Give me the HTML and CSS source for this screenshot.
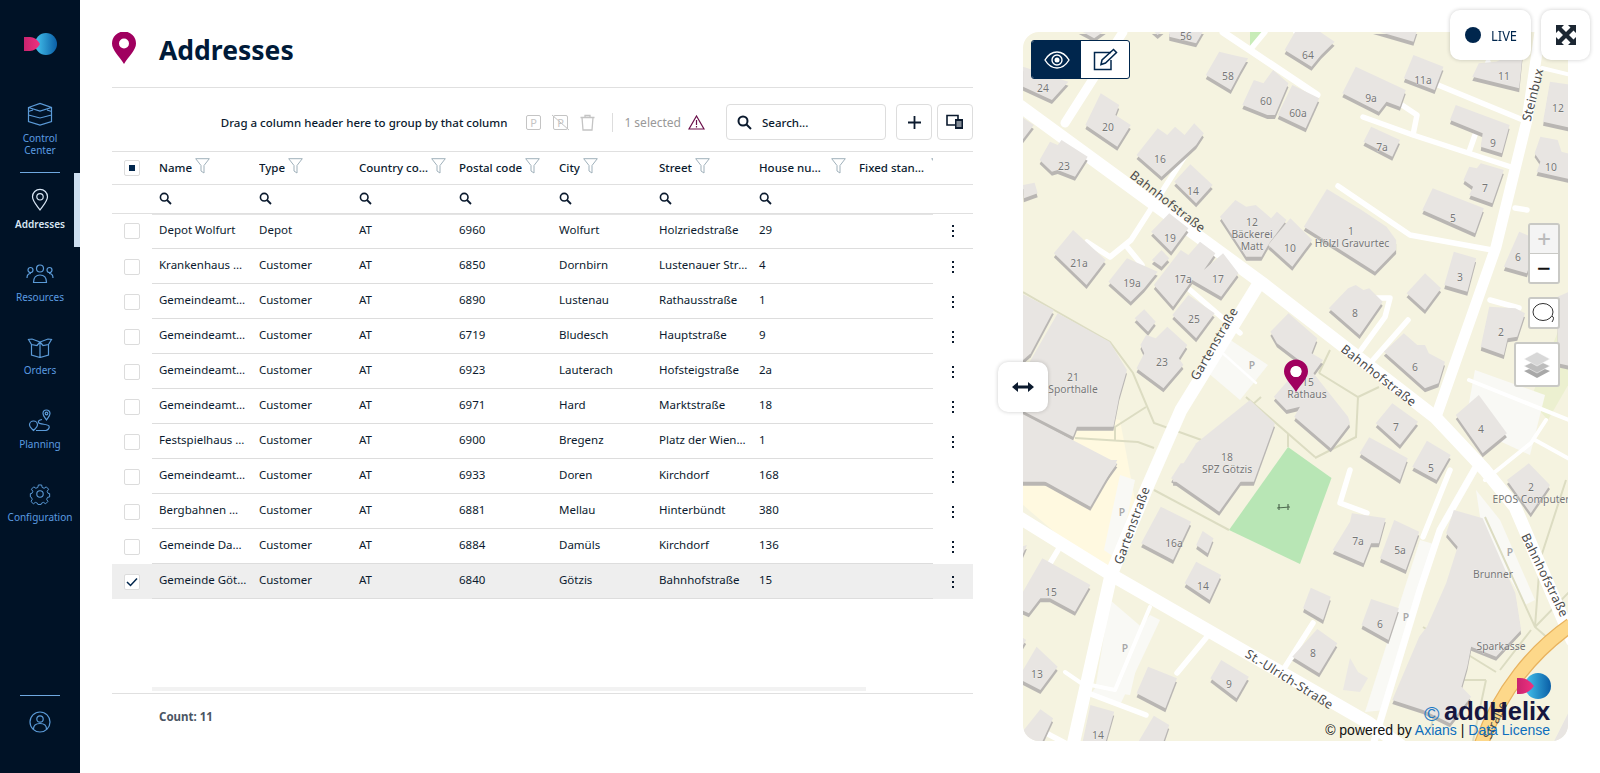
FILE: index.html
```html
<!DOCTYPE html>
<html lang="en">
<head>
<meta charset="utf-8">
<title>Addresses</title>
<link rel="stylesheet" href="styles.css">
</head>
<body>
<div class="app">
  <nav class="nav">
    <svg class="logo" width="40" height="30" viewBox="0 0 40 30"><defs><linearGradient id="lb" x1="0" x2="1"><stop offset="0" stop-color="#45c4ee"/><stop offset="1" stop-color="#0a5ea6"/></linearGradient><linearGradient id="lp" x1="0" x2="1"><stop offset="0" stop-color="#c9246f"/><stop offset="1" stop-color="#f0317f"/></linearGradient></defs><circle cx="26" cy="15" r="11" fill="url(#lb)"/><path d="M4 8h6q6 0 10 7-4 7-10 7H4z" fill="url(#lp)"/></svg>
    <a class="nav-item nav-first"><svg class="ni" width="26" height="24" viewBox="0 0 26 24"><path d="M1.500 5.500 13 1.500l11.500 4v14L13 23 1.500 19.500zM1.500 5.500 13 9l11.500-3.500M1.500 9.500 6 8M24.500 9.500 20 8M1.500 13 13 16l11.500-3" fill="none"/></svg><span>Control<br>Center</span></a>
    <div class="nav-rule"></div>
    <a class="nav-item nav-active"><svg class="ni" width="18" height="23" viewBox="0 0 18 23"><path d="M9 22C5 16.500 1.500 13 1.500 8.800a7.500 7.500 0 0 1 15 0C16.500 13 13 16.500 9 22z" fill="none"/><circle cx="9" cy="8.800" r="3.200" fill="none"/></svg><span>Addresses</span></a>
    <a class="nav-item nav-res"><svg class="ni" width="28" height="20" viewBox="0 0 28 20"><circle cx="14" cy="4.500" r="3.500" fill="none"/><circle cx="4.500" cy="6" r="2.500" fill="none"/><circle cx="23.500" cy="6" r="2.500" fill="none"/><path d="M7.500 18.500c0-5 2.500-7.500 6.500-7.500s6.500 2.500 6.500 7.500zM1 14c0-3 1.500-4.500 4-4.500M27 14c0-3-1.500-4.500-4-4.500" fill="none"/></svg><span>Resources</span></a>
    <a class="nav-item nav-ord"><svg class="ni" width="26" height="21" viewBox="0 0 26 21"><path d="M4.500 7.500V18l8.500 2.500 8.500-2.500V7.500M13 5v15.500M13 5 5 2 1.500 2.500l3 5L10 8.500zM13 5l8-3 3.500.5-3 5L16 8.500z" fill="none"/></svg><span>Orders</span></a>
    <a class="nav-item nav-plan"><svg class="ni" width="24" height="23" viewBox="0 0 24 23"><path d="M18.500 11c-2-3-3.500-4.500-3.500-6.500a3.500 3.500 0 0 1 7 0c0 2-1.500 3.500-3.500 6.500z" fill="none"/><circle cx="18.500" cy="4.500" r="1.300" fill="none"/><path d="M5.500 21.500c-2-2-4-3.500-4-5.500a4 4 0 0 1 8 0c0 2-2 3.500-4 5.500z" fill="none"/><path d="M14 10.500c-3 .5-4 1.500-3.500 3 .8 2 9.500 1.500 10.500 3.500 1 2.500-1.500 4-3 4.500H8" fill="none"/></svg><span>Planning</span></a>
    <a class="nav-item nav-conf"><svg class="ni" width="22" height="22" viewBox="0 0 24 24"><circle cx="12" cy="12" r="3.500" fill="none"/><path d="M10 1.500h4l.6 3 2.400 1 2.600-1.700 2.800 2.800L20.700 9.200l1 2.400 2 .4v4l-2.600.5-1 2.400 1.500 2.600-2.800 2.800-2.600-1.700-2.400 1-.4 1.500h-4l-.5-1.500-2.400-1-2.600 1.700-2.800-2.800 1.500-2.600-1-2.400L.300 16v-4l2-.4 1-2.400-1.700-2.600 2.800-2.800L7 5.500l2.400-1z" transform="translate(1.200 .8) scale(.9)" fill="none"/></svg><span>Configuration</span></a>
    <div class="nav-rule nav-rule-bottom"></div>
    <svg class="ni nav-user" width="22" height="22" viewBox="0 0 22 22"><circle cx="11" cy="11" r="10" fill="none"/><circle cx="11" cy="8" r="3.200" fill="none"/><path d="M4.500 18c0-4 2.500-5.500 6.500-5.500s6.500 1.500 6.500 5.500" fill="none"/></svg>
  </nav>

  <main class="list">
    <header class="title">
      <svg width="24" height="32" viewBox="0 0 24 32"><path fill-rule="evenodd" d="M12 32C7 24 0 18 0 11.500a12 12 0 0 1 24 0C24 18 17 24 12 32zM12 6.500a5 5 0 1 0 0 10 5 5 0 0 0 0-10z" fill="#a0005f"/></svg>
      <h1>Addresses</h1>
    </header>
    <div class="toolbar">
      <span class="hint">Drag a column header here to group by that column</span>
      <svg class="ti" width="15" height="15" viewBox="0 0 15 15"><rect x=".5" y=".5" width="14" height="14" rx="1.500" fill="none" stroke="#c4c4c4"/><text x="7.500" y="11.500" class="pt">P</text></svg>
      <svg class="ti" width="19" height="17" viewBox="0 0 19 17"><rect x="2.500" y="1.500" width="14" height="14" rx="1.500" fill="none" stroke="#c4c4c4"/><text x="9.500" y="12.500" class="pt">P</text><path d="M1 1l17 15" stroke="#c4c4c4"/></svg>
      <svg class="ti" width="15" height="17" viewBox="0 0 15 17"><path d="M.500 3.500h14M5 3.500V1.500h5v2M2 3.500l1 12.500h9l1-12.500" fill="none" stroke="#c4c4c4" stroke-width="1.300"/></svg>
      <span class="sep"></span>
      <span class="sel">1 selected</span>
      <svg class="warn" width="17" height="15" viewBox="0 0 17 15"><path d="M8.500 1 16 14H1z" fill="none" stroke="#6a0f4a" stroke-width="1.200"/><path d="M8.500 5v5M8.500 11v1.500" stroke="#6a0f4a" stroke-width="1.200"/></svg>
      <label class="search"><svg width="15" height="15" viewBox="0 0 15 15"><circle cx="6" cy="6" r="4.500" fill="none" stroke="#0b1a2e" stroke-width="2"/><path d="M9.500 9.500 14 14" stroke="#0b1a2e" stroke-width="2"/></svg><span>Search...</span></label>
      <button class="tbtn"><svg width="15" height="15" viewBox="0 0 15 15"><path d="M7.500 1v13M1 7.500h13" stroke="#0b1a2e" stroke-width="1.800"/></svg></button>
      <button class="tbtn"><svg width="18" height="16" viewBox="0 0 18 16"><path d="M1 1.500h11V11H1z" fill="none" stroke="#0b1a2e" stroke-width="1.600"/><path d="M9 5h8v10H9z" fill="#0b1a2e"/><path d="M10.500 8h5M10.500 10h5M10.500 12h5" stroke="#fff"/></svg></button>
    </div>

    <div class="hrow">
      <div class="chk"><span class="box"><i class="ind"></i></span></div>
      <div class="hc"><span class="hl">Name</span><svg class="fil" width="15" height="16" viewBox="0 0 15 16"><path d="M.7.700h13.600L9 7.500V15l-3-2V7.500z"/></svg></div>
      <div class="hc"><span class="hl">Type</span><svg class="fil" width="15" height="16" viewBox="0 0 15 16"><path d="M.7.700h13.600L9 7.500V15l-3-2V7.500z"/></svg></div>
      <div class="hc"><span class="hl hl-wide">Country code</span><svg class="fil" width="15" height="16" viewBox="0 0 15 16"><path d="M.7.700h13.600L9 7.500V15l-3-2V7.500z"/></svg></div>
      <div class="hc"><span class="hl">Postal code</span><svg class="fil" width="15" height="16" viewBox="0 0 15 16"><path d="M.7.700h13.600L9 7.500V15l-3-2V7.500z"/></svg></div>
      <div class="hc"><span class="hl">City</span><svg class="fil" width="15" height="16" viewBox="0 0 15 16"><path d="M.7.700h13.600L9 7.500V15l-3-2V7.500z"/></svg></div>
      <div class="hc"><span class="hl">Street</span><svg class="fil" width="15" height="16" viewBox="0 0 15 16"><path d="M.7.700h13.600L9 7.500V15l-3-2V7.500z"/></svg></div>
      <div class="hc"><span class="hl hl-fix">House number</span><svg class="fil" width="15" height="16" viewBox="0 0 15 16"><path d="M.7.700h13.600L9 7.500V15l-3-2V7.500z"/></svg></div>
      <div class="hc hc-last"><span class="hl hl-wide">Fixed standing time</span><svg class="fil" width="15" height="16" viewBox="0 0 15 16"><path d="M.7.700h13.600L9 7.500V15l-3-2V7.500z"/></svg></div>
    </div>
    <div class="frow">
      <div class="chk"></div>
      <div class="fc"><svg width="13" height="13" viewBox="0 0 13 13"><circle cx="5.200" cy="5.200" r="3.800" fill="none" stroke="#0b1a2e" stroke-width="1.600"/><path d="M8 8l4 4" stroke="#0b1a2e" stroke-width="1.800"/></svg></div>
      <div class="fc"><svg width="13" height="13" viewBox="0 0 13 13"><circle cx="5.200" cy="5.200" r="3.800" fill="none" stroke="#0b1a2e" stroke-width="1.600"/><path d="M8 8l4 4" stroke="#0b1a2e" stroke-width="1.800"/></svg></div>
      <div class="fc"><svg width="13" height="13" viewBox="0 0 13 13"><circle cx="5.200" cy="5.200" r="3.800" fill="none" stroke="#0b1a2e" stroke-width="1.600"/><path d="M8 8l4 4" stroke="#0b1a2e" stroke-width="1.800"/></svg></div>
      <div class="fc"><svg width="13" height="13" viewBox="0 0 13 13"><circle cx="5.200" cy="5.200" r="3.800" fill="none" stroke="#0b1a2e" stroke-width="1.600"/><path d="M8 8l4 4" stroke="#0b1a2e" stroke-width="1.800"/></svg></div>
      <div class="fc"><svg width="13" height="13" viewBox="0 0 13 13"><circle cx="5.200" cy="5.200" r="3.800" fill="none" stroke="#0b1a2e" stroke-width="1.600"/><path d="M8 8l4 4" stroke="#0b1a2e" stroke-width="1.800"/></svg></div>
      <div class="fc"><svg width="13" height="13" viewBox="0 0 13 13"><circle cx="5.200" cy="5.200" r="3.800" fill="none" stroke="#0b1a2e" stroke-width="1.600"/><path d="M8 8l4 4" stroke="#0b1a2e" stroke-width="1.800"/></svg></div>
      <div class="fc"><svg width="13" height="13" viewBox="0 0 13 13"><circle cx="5.200" cy="5.200" r="3.800" fill="none" stroke="#0b1a2e" stroke-width="1.600"/><path d="M8 8l4 4" stroke="#0b1a2e" stroke-width="1.800"/></svg></div>
    </div>

    <div class="rows">
      <div class="row row-first"><div class="chk"><span class="box"></span></div><div class="cells"><span>Depot Wolfurt</span><span>Depot</span><span>AT</span><span>6960</span><span>Wolfurt</span><span>Holzriedstraße</span><span>29</span><span></span></div><div class="keb"><i></i><i></i><i></i></div></div>
      <div class="row"><div class="chk"><span class="box"></span></div><div class="cells"><span>Krankenhaus Dornbirn</span><span>Customer</span><span>AT</span><span>6850</span><span>Dornbirn</span><span>Lustenauer Straße</span><span>4</span><span></span></div><div class="keb"><i></i><i></i><i></i></div></div>
      <div class="row"><div class="chk"><span class="box"></span></div><div class="cells"><span>Gemeindeamt Lustenau</span><span>Customer</span><span>AT</span><span>6890</span><span>Lustenau</span><span>Rathausstraße</span><span>1</span><span></span></div><div class="keb"><i></i><i></i><i></i></div></div>
      <div class="row"><div class="chk"><span class="box"></span></div><div class="cells"><span>Gemeindeamt Bludesch</span><span>Customer</span><span>AT</span><span>6719</span><span>Bludesch</span><span>Hauptstraße</span><span>9</span><span></span></div><div class="keb"><i></i><i></i><i></i></div></div>
      <div class="row"><div class="chk"><span class="box"></span></div><div class="cells"><span>Gemeindeamt Lauterach</span><span>Customer</span><span>AT</span><span>6923</span><span>Lauterach</span><span>Hofsteigstraße</span><span>2a</span><span></span></div><div class="keb"><i></i><i></i><i></i></div></div>
      <div class="row"><div class="chk"><span class="box"></span></div><div class="cells"><span>Gemeindeamt Hard</span><span>Customer</span><span>AT</span><span>6971</span><span>Hard</span><span>Marktstraße</span><span>18</span><span></span></div><div class="keb"><i></i><i></i><i></i></div></div>
      <div class="row"><div class="chk"><span class="box"></span></div><div class="cells"><span>Festspielhaus Bregenz</span><span>Customer</span><span>AT</span><span>6900</span><span>Bregenz</span><span>Platz der Wiener Symphoniker</span><span>1</span><span></span></div><div class="keb"><i></i><i></i><i></i></div></div>
      <div class="row"><div class="chk"><span class="box"></span></div><div class="cells"><span>Gemeindeamt Doren</span><span>Customer</span><span>AT</span><span>6933</span><span>Doren</span><span>Kirchdorf</span><span>168</span><span></span></div><div class="keb"><i></i><i></i><i></i></div></div>
      <div class="row"><div class="chk"><span class="box"></span></div><div class="cells"><span>Bergbahnen Mellau</span><span>Customer</span><span>AT</span><span>6881</span><span>Mellau</span><span>Hinterbündt</span><span>380</span><span></span></div><div class="keb"><i></i><i></i><i></i></div></div>
      <div class="row"><div class="chk"><span class="box"></span></div><div class="cells"><span>Gemeinde Damüls</span><span>Customer</span><span>AT</span><span>6884</span><span>Damüls</span><span>Kirchdorf</span><span>136</span><span></span></div><div class="keb"><i></i><i></i><i></i></div></div>
      <div class="row row-sel"><div class="chk"><span class="box"><svg width="12" height="10" viewBox="0 0 12 10"><path d="M1 5l3.500 3.500L11 1.500" fill="none" stroke="#00264d" stroke-width="1.500"/></svg></span></div><div class="cells"><span>Gemeinde Götzis</span><span>Customer</span><span>AT</span><span>6840</span><span>Götzis</span><span>Bahnhofstraße</span><span>15</span><span></span></div><div class="keb"><i></i><i></i><i></i></div></div>
    </div>
    <div class="hscroll"></div>
    <footer class="count">Count: 11</footer>
  </main>

  <button class="resize card"><svg width="22" height="12" viewBox="0 0 22 12"><path d="M0 6l6-5v3.500h10V1l6 5-6 5V7.500H6V11z" fill="#0b1a2e"/></svg></button>

  <section class="map">
    <svg class="mapsvg" width="545" height="709" viewBox="1023 32 545 709">
      <rect x="1023" y="32" width="545" height="709" fill="#f5f3e0"/>
      <path d="M1023 505 1105 575 1135 500 1120 420 1023 400z" fill="#fff9e0"/>
      <path d="M1288 447 1331.500 478 1300 564 1229 530z" fill="#b8e6b5"/>
      <path d="M1250 32 1265 32 1250 48z" fill="#c8ecb8"/>
      <path d="M1530 400 1571 300 1571 380 1548 420z" fill="#ecf0d0"/>
      <g class="pk">
        <path d="M1223 335 1268 365 1240 400 1207 372z"/>
        <path d="M1104 550 1120 475 1135 480 1118 560z"/>
        <path d="M1110 600 1145 630 1130 695 1095 690z"/>
        <path d="M1150 615 1160 620 1120 705 1090 695z"/>
        <path d="M1475 370 1545 395 1530 455 1465 425z"/>
        <path d="M1476 490 1500 520 1535 600 1525 605 1482 530z"/>
        <path d="M1420 540 1437 545 1385 710 1365 712z"/>
      </g>
      <g class="fp">
        <path d="M1023 292 1054 310 1110 342 1133 373 1154 423 1210 443 1261 397"/>
        <path d="M1146 407 1115 427 1115 440M1075 438 1138 442 1154 448"/>
        <path d="M1319 373 1358 397 1379 387M1358 397 1356 437 1315 458M1246 397 1315 457M1288 433 1288 447M1330 350 1319 373"/>
        <path d="M1154 490 1229 530"/>
        <path d="M1423 627 1496 672M1442 683 1463 680 1486 680M1442 683 1431 727M1486 680 1473 741M1531 630 1500 670M1485 517 1535 627 1550 640M1535 627 1571 590M1566 480 1540 560 1535 627"/>
      </g>
      <g class="rd">
        <path class="w14" d="M1020 106 1262 283 1435 417 1485 470 1515 507 1572 640"/>
        <path class="w12" d="M1540 32 1527 120 1496 247 1436 417"/>
        <path class="w14" d="M1258 285 1181 410 1146 490 1111 575 1073 745"/>
        <path class="w14" d="M1020 518 1115 577 1369 723 1400 745"/>
        <path class="w10" d="M1123 32 1065 123"/>
        <path class="w8" d="M1223 32 1317 95"/>
        <path class="w6" d="M1265 32 1250 50M1296 32 1317 43M1190 148 1131 240 1110 257 1087 242M1128 248 1142 265M1338 186 1410 235 1492 250M1363 117 1413 135 1511 167M1413 135 1417 115 1402 105M1438 85 1523 120M1475 135 1469 152M1488 62 1487 75M1515 208 1527 210M1190 290 1240 333M1373 298 1390 298 1385 317 1361 350M1408 320 1373 360M1490 300 1519 308M1350 470 1340 503 1367 513M1423 537 1450 470M1058 550 1046 570M1088 693 1146 715M1206 638 1177 673M1313 623 1285 667M1046 733 1065 743"/>
        <path class="w8" d="M1480 460 1440 530 1420 590 1373 745"/>
        <path class="w5" d="M1150 607 1115 690 1081 683 1065 672M1469 380 1569 420M1546 420 1531 443 1485 480M1535 440 1571 460M1542 68 1571 75"/>
        <path class="w3" d="M1217 348 1256 383"/>
      </g>
      <path class="moe" d="M1571 625C1535 650 1500 690 1481 745"/>
      <path class="mo" d="M1571 625C1535 650 1500 690 1481 745"/>

      <g class="shadow">
        <g class="bl" transform="translate(1000,0) scale(.3846,.3333)">
          <polygon points="60,200 178,245 135,300 60,260"/><polygon points="440,90 530,90 510,130 440,110"/><polygon points="205,90 275,90 245,115"/><polygon points="395,90 425,90 410,105"/>
          <polygon points="740,150 770,90 825,90 870,125 835,165 810,200"/><polygon points="535,225 570,155 605,165 625,170 645,175 625,215 600,270"/>
          <polygon points="630,315 660,240 685,250 710,210 750,250 715,345 695,345"/><polygon points="722,345 760,255 830,295 795,385"/>
          <polygon points="890,280 925,200 1055,270 1040,320 1005,305 985,335"/><polygon points="1050,235 1075,165 1153,200 1130,270"/>
          <polygon points="1228,230 1245,190 1290,185 1360,150 1350,265"/><polygon points="970,90 1085,90 1075,125"/>
          <polygon points="1412,365 1430,245 1490,255 1490,385"/><polygon points="1170,360 1185,315 1325,375 1305,460 1250,440 1255,400"/>
          <polygon points="222,375 262,280 310,315 300,345 340,375 305,440"/><polygon points="355,465 410,385 435,405 455,380 480,405 505,370 530,400 510,435 420,530"/>
          <polygon points="103,480 130,425 150,435 160,420 228,470 195,530 150,510 135,515"/><polygon points="60,555 90,548 98,580 62,595"/>
          <polygon points="453,545 495,493 553,555 510,610"/><polygon points="55,350 88,375 55,425"/><polygon points="945,425 965,380 1040,420 1020,470"/>
          <polygon points="1205,540 1220,500 1240,505 1250,490 1310,510 1280,610 1220,585 1230,560"/>
          <polygon points="1390,460 1405,410 1450,420 1460,455 1490,465 1490,540 1395,515 1405,485"/><polygon points="1098,630 1125,565 1258,625 1235,700"/>
          <polygon points="572,650 612,600 640,620 665,615 705,655 720,635 745,660 700,730 680,770 640,770"/><polygon points="697,735 755,655 812,720 760,800"/>
          <polygon points="790,680 850,567 940,630 1005,680 1030,720 1030,750 975,815"/>
        </g>
        <g class="bl" transform="translate(1000,210) scale(.3846,.3333)">
          <polygon points="393,65 440,10 490,55 445,125"/><polygon points="140,130 190,60 275,150 225,225"/><polygon points="282,215 330,145 410,185 375,235 340,275"/>
          <polygon points="395,150 420,120 440,145 420,170"/><polygon points="400,225 470,120 490,135 520,95 560,130 530,180 580,130 620,190 575,260 500,210 450,290"/>
          <polygon points="448,315 490,255 558,310 510,385"/><polygon points="350,325 375,298 405,335 385,365"/>
          <polygon points="355,475 375,430 365,405 380,375 405,385 435,350 487,405 465,445 477,465 425,535"/>
          <polygon points="55,250 140,300 80,430 55,455"/><polygon points="70,470 150,310 285,395 330,480 310,560 295,650 200,650 190,680 55,600"/>
          <polygon points="55,610 305,760 270,815 55,815"/><polygon points="855,295 905,235 925,225 945,240 960,235 995,275 935,375"/>
          <polygon points="998,425 1050,370 1085,405 1105,405 1115,430 1157,455 1140,520 1105,535"/>
          <polygon points="703,365 750,310 825,385 810,430 840,450 815,490 905,620 910,640 860,715 765,620 780,590 745,600 712,560 750,510 800,470 720,400"/>
          <polygon points="977,640 1020,580 1087,635 1040,705"/><polygon points="1072,770 1110,692 1172,735 1135,810"/><polygon points="935,730 960,682 1060,745 1040,810"/>
          <polygon points="1155,225 1180,125 1238,145 1215,245"/><polygon points="1057,250 1105,190 1147,235 1105,300"/><polygon points="1310,170 1350,65 1400,90 1370,190"/>
          <polygon points="1250,410 1272,290 1340,295 1365,310 1345,380 1320,385 1310,435"/><polygon points="1185,615 1245,555 1318,670 1255,730"/>
          <polygon points="450,810 510,700 650,570 715,640 690,720 660,815 450,815"/><polygon points="1450,260 1490,240 1490,470 1450,460"/>
        </g>
        <g class="bl" transform="translate(1000,470) scale(.3846,.3333)">
          <polygon points="55,-30 305,-30 235,110 55,-5"/><polygon points="445,25 470,-20 660,-20 570,125"/><polygon points="367,220 418,110 497,155 450,270"/>
          <polygon points="510,225 527,183 555,205 540,250"/><polygon points="480,340 510,275 575,315 545,390"/><polygon points="55,375 110,265 235,345 195,425 130,385 105,385 75,430 55,420"/>
          <polygon points="55,610 95,530 150,590 105,660 55,630"/><polygon points="215,815 235,705 297,725 275,815"/><polygon points="547,625 575,570 647,620 615,685"/>
          <polygon points="355,670 385,590 460,625 430,715"/><polygon points="360,815 400,737 440,765 425,815"/><polygon points="788,415 808,353 860,380 840,450"/>
          <polygon points="940,465 965,387 1037,415 1010,510"/><polygon points="760,560 825,477 877,520 830,610"/>
          <polygon points="865,240 910,155 915,130 1003,145 985,220 965,220 945,280"/><polygon points="988,265 1025,150 1090,185 1055,300"/>
          <polygon points="1318,30 1375,-20 1430,45 1380,130"/>
          <polygon points="1160,190 1180,120 1255,145 1340,370 1355,480 1290,560 1225,530 1215,590 1200,650 1225,680 1170,760 1100,720 1020,690 1090,500 1110,470 1160,340 1190,230"/>
          <polygon points="55,790 105,718 138,745 110,815 55,815"/><polygon points="1440,815 1490,700 1490,815"/><polygon points="55,230 70,225 55,265"/><polygon points="55,500 68,510 55,535"/>
        </g>
      </g>
      <path d="M1343 690 1350 658 1358 672 1368 678 1360 692z" fill="#ebe8e4"/>
      <path d="M1277 508l13-1M1279 504v6M1288 504v6" stroke="#4f6a50" stroke-width="1.200" fill="none"/>

      <g class="lb">
        <text x="1186" y="40">56</text><text x="1308" y="59">64</text><text x="1228" y="80">58</text><text x="1266" y="105">60</text><text x="1298" y="117">60a</text><text x="1371" y="102">9a</text><text x="1423" y="84">11a</text><text x="1504" y="80">11</text><text x="1043" y="92">24</text><text x="1558" y="112">12</text><text x="1108" y="131">20</text><text x="1493" y="147">9</text><text x="1382" y="151">7a</text><text x="1160" y="163">16</text><text x="1064" y="170">23</text><text x="1551" y="171">10</text><text x="1193" y="195">14</text><text x="1485" y="192">7</text><text x="1453" y="222">5</text><text x="1252" y="226">12</text><text x="1252" y="238">Bäckerei</text><text x="1252" y="250">Matt</text><text x="1290" y="252">10</text><text x="1351" y="235">1</text><text x="1352" y="247">Hölzl Gravurtec</text><text x="1170" y="242">19</text>
        <text x="1079" y="267">21a</text><text x="1132" y="287">19a</text><text x="1183" y="283">17a</text><text x="1218" y="283">17</text><text x="1194" y="323">25</text><text x="1162" y="366">23</text><text x="1073" y="381">21</text><text x="1073" y="393">Sporthalle</text><text x="1252" y="369" class="p">P</text><text x="1308" y="386">15</text><text x="1307" y="398">Rathaus</text><text x="1227" y="461">18</text><text x="1227" y="473">SPZ Götzis</text><text x="1355" y="317">8</text><text x="1415" y="371">6</text><text x="1460" y="281">3</text><text x="1518" y="261">6</text><text x="1501" y="336">2</text><text x="1396" y="431">7</text><text x="1481" y="433">4</text><text x="1431" y="472">5</text>
        <text x="1531" y="491">2</text><text x="1531" y="503">EPOS Computer</text><text x="1122" y="516" class="p">P</text><text x="1174" y="547">16a</text><text x="1358" y="545">7a</text><text x="1400" y="554">5a</text><text x="1510" y="556" class="p">P</text><text x="1493" y="578">Brunner</text><text x="1203" y="590">14</text><text x="1051" y="596">15</text><text x="1406" y="621" class="p">P</text><text x="1380" y="628">6</text><text x="1501" y="650">Sparkasse</text><text x="1125" y="652" class="p">P</text><text x="1313" y="657">8</text><text x="1229" y="688">9</text><text x="1037" y="678">13</text><text x="1098" y="739">14</text>
      </g>
      <g class="rl">
        <text transform="translate(1165,205) rotate(38)">Bahnhofstraße</text>
        <text transform="translate(1376,379) rotate(38)">Bahnhofstraße</text>
        <text transform="translate(1541,577) rotate(64)">Bahnhofstraße</text>
        <text transform="translate(1537,96) rotate(-76)">Steinbux</text>
        <text transform="translate(1218,346) rotate(-60)">Gartenstraße</text>
        <text transform="translate(1136,527) rotate(-70)">Gartenstraße</text>
        <text transform="translate(1287,683) rotate(32)">St.-Ulrich-Straße</text>
        <text transform="translate(1499,722) rotate(-65)">Straße</text>
      </g>
      <path fill-rule="evenodd" d="M1296 392C1291 384 1284 378 1284 371.500a12 12 0 0 1 24 0C1308 378 1301 384 1296 392zM1296 366a5.500 5.500 0 1 0 0 11 5.500 5.500 0 0 0 0-11z" fill="#a0005f"/>
      <circle cx="1296" cy="371.500" r="5.500" fill="#fff"/>
      <circle cx="1538" cy="686" r="13" fill="url(#lb)"/>
      <path d="M1517 678h3q8 0 14 8-6 8-14 8h-3z" fill="url(#lp)"/>
      <text class="cr" x="1424" y="721">©</text>
      <text class="ah" x="1444" y="720">addHelix</text>
    </svg>
    <div class="attr">© powered by <a>Axians</a> | <a>Data License</a></div>

    <div class="mode">
      <span class="mode-on"><svg width="26" height="18" viewBox="0 0 26 18"><path d="M1 9c3-5 7-8 12-8s9 3 12 8c-3 5-7 8-12 8S4 14 1 9z" fill="none" stroke="#fff" stroke-width="1.400"/><circle cx="13" cy="9" r="5" fill="none" stroke="#fff" stroke-width="1.400"/><circle cx="13" cy="9" r="2.500" fill="#fff"/></svg></span>
      <span class="mode-off"><svg width="25" height="23" viewBox="0 0 25 23"><path d="M18 4.500H1.500v17H18V12" fill="none" stroke="#00264d" stroke-width="1.500"/><path d="M8 16.500l1-4.500L20.500 1.500l3 3L12.500 15z" fill="none" stroke="#00264d" stroke-width="1.500"/></svg></span>
    </div>
    <div class="zoom"><button class="zb zb-off">+</button><button class="zb">−</button></div>
    <button class="lasso"><svg width="24" height="22" viewBox="0 0 24 22"><ellipse cx="11" cy="10" rx="10" ry="8.500" fill="none" stroke="#333" stroke-width="1"/><path d="M20 14c2 1 2 3 0 6" fill="none" stroke="#333"/></svg></button>
    <button class="layers"><svg width="28" height="28" viewBox="0 0 28 28"><path d="M14 15 1 20l13 7 13-7z" fill="#a8a8a8"/><path d="M14 9 1 15l13 7 13-7z" fill="#bdbdbd" stroke="#fff" stroke-width=".5"/><path d="M14 1 1 8l13 7 13-7z" fill="#d8d8d8" stroke="#fff" stroke-width=".5"/></svg></button>
  </section>

  <div class="tops">
    <div class="live card"><i></i><span>LIVE</span></div>
    <button class="expand card"><svg width="20" height="20" viewBox="0 0 20 20"><path d="M0 0h8L5.500 2.500 10 7l4.500-4.500L12 0h8v8l-2.500-2.500L13 10l4.500 4.500L20 12v8h-8l2.500-2.500L10 13l-4.500 4.500L8 20H0v-8l2.500 2.500L7 10 2.500 5.500 0 8z" fill="#1c2733"/></svg></button>
  </div>
</div>
</body>
</html>
```
FILE: styles.css
```css
* { box-sizing: border-box; }
html, body { margin: 0; height: 100%; overflow: hidden; background: #fff; }
body { font-family: "Noto Sans", sans-serif; font-size: 11.500px; color: #0b1a2e; }
button { padding: 0; font: inherit; background: #fff; cursor: pointer; }

.app { position: relative; display: flex; align-items: flex-start; height: 773px; }

/* side navigation */
.nav { width: 80px; height: 773px; flex: none; background: #001226; display: flex; flex-direction: column; align-items: center; color: #5b9be0; }
.logo { margin-top: 29px; flex: none; }
.nav-item { position: relative; width: 80px; display: flex; flex-direction: column; align-items: center; text-align: center; font-size: 10px; line-height: 12px; }
.nav-item span { display: block; }
.ni { stroke: #5b9bd8; stroke-width: 1.200; flex: none; }
.nav-first { margin-top: 43px; height: 70px; }
.nav-first span { margin-top: 6px; }
.nav-rule { width: 40px; height: 1px; background: #6fa8e0; flex: none; }
.nav-active { height: 74px; padding-top: 15px; color: #d8e6f4; font-weight: 600; }
.nav-active span { margin-top: 7px; }
.nav-active .ni { stroke: #d8e6f4; }
.nav-active::after { content: ""; position: absolute; right: 0; top: 0; width: 6px; height: 74px; background: #cddff0; }
.nav-res { margin-top: 17px; height: 73px; }
.nav-res span { margin-top: 7px; }
.nav-ord { height: 72px; }
.nav-ord span { margin-top: 6px; }
.nav-plan { height: 74px; }
.nav-plan span { margin-top: 6px; }
.nav-conf { height: 60px; }
.nav-conf span { margin-top: 6px; }
.nav-rule-bottom { margin-top: auto; }
.nav-user { margin: 15px 0 40px; }

/* address list */
.list { width: 861px; margin-left: 32px; flex: none; height: 773px; display: flex; flex-direction: column; }
.title { height: 88px; flex: none; display: flex; align-items: center; gap: 23px; padding-top: 8px; border-bottom: 1px solid #e0e0e0; }
.title h1 { margin: 4px 0 0; font-size: 26.500px; font-weight: 700; line-height: 32px; color: #001a38; }
.toolbar { height: 63px; flex: none; display: flex; align-items: center; justify-content: flex-end; padding-top: 5px; }
.hint { font-weight: 500; margin-right: 19px; }
.ti { margin-right: 10px; flex: none; }
.pt { font-size: 11px; fill: #c4c4c4; text-anchor: middle; }
.sep { width: 1px; height: 19px; background: #ddd; margin: 0 11px 0 7px; }
.sel { color: #999; font-size: 12px; }
.warn { margin: 0 21px 0 7px; flex: none; }
.search { width: 160px; height: 36px; border: 1px solid #ddd; border-radius: 4px; display: flex; align-items: center; gap: 10px; padding-left: 10px; font-weight: 500; margin-right: 10px; }
.tbtn { width: 36px; height: 36px; border: 1px solid #ddd; border-radius: 4px; display: flex; align-items: center; justify-content: center; margin-left: 5px; }
.search + .tbtn { margin-left: 0; }

.chk { width: 40px; flex: none; display: flex; align-items: center; justify-content: center; }
.box { width: 16px; height: 16px; background: #fff; border: 1px solid #dcdcdc; border-radius: 2px; display: flex; align-items: center; justify-content: center; }
.ind { width: 6px; height: 6px; background: #00264d; }

.hrow { height: 34px; flex: none; display: flex; border-top: 1px solid #e0e0e0; border-bottom: 1px solid #e0e0e0; font-weight: 500; }
.hc { width: 100px; flex: none; padding-left: 7px; display: flex; align-items: center; overflow: hidden; }
.hc-last { width: 81px; }
.hl { max-width: 69px; white-space: nowrap; overflow: hidden; text-overflow: ellipsis; flex: none; margin-top: -2px; }
.hl-fix { width: 69px; }
.hl-wide { max-width: 72px; width: 72px; margin-right: -3px; }
.fil { margin: -4px 0 0 3px; flex: none; fill: none; stroke: #9fb0ba; stroke-width: 1; }

.frow { height: 29px; flex: none; display: flex; border-bottom: 1px solid #e0e0e0; }
.fc { width: 100px; flex: none; padding: 0 0 1px 7px; display: flex; align-items: center; }

.rows { flex: none; height: 470px; }
.row { height: 35px; display: flex; align-items: stretch; }
.cells { width: 781px; flex: none; display: flex; border-bottom: 1px solid #ddd; }
.cells span { width: 100px; flex: none; padding: 0 4px 0 7px; line-height: 32px; white-space: nowrap; overflow: hidden; text-overflow: ellipsis; }
.cells span:last-child { width: 81px; }
.keb { width: 40px; flex: none; display: flex; flex-direction: column; align-items: center; justify-content: center; gap: 3px; }
.keb i { width: 2px; height: 2px; background: #0b1a2e; display: block; }
.row-first .cells { border-top: 1px solid #e4e4e4; }
.row-first .cells span { line-height: 29px; }
.row-first .chk { padding-bottom: 2px; }
.row-first .keb { border-bottom: 1px solid #ddd; }
.row-sel { background: #eee; }

.hscroll { width: 714px; height: 4px; margin: 3px 0 0 40px; background: #f2f2f2; flex: none; }
.count { flex: none; margin-top: 2px; height: 48px; border-top: 1px solid #e0e0e0; padding: 14px 0 0 47px; font-weight: 700; color: #4a5563; line-height: 18px; }

/* map */
.map { position: relative; width: 545px; height: 709px; margin: 32px 0 0 50px; border-radius: 16px; overflow: hidden; flex: none; }
.mapsvg { display: block; }
.shadow { filter: drop-shadow(0 4px 0 #b9b6b3); }
.bl polygon { fill: #e8e5e2; }
.pk path { fill: #f9f9f5; }
.fp path { fill: none; stroke: #dcdcc2; stroke-width: 2px; }
.rd path { fill: none; stroke: #fff; stroke-linecap: round; stroke-linejoin: round; }
.rd .w14 { stroke-width: 13px; }
.rd .w12 { stroke-width: 11px; }
.rd .w10 { stroke-width: 9px; }
.rd .w8 { stroke-width: 7px; }
.rd .w6 { stroke-width: 5.500px; }
.rd .w5 { stroke-width: 4px; }
.rd .w3 { stroke-width: 2.500px; }
.moe { fill: none; stroke: #e8b35f; stroke-width: 15px; }
.mo { fill: none; stroke: #fdd88a; stroke-width: 12.500px; }
.lb text { font-size: 10.300px; fill: #767676; text-anchor: middle; stroke: #fff; stroke-width: .4px; paint-order: stroke; }
.lb .p { fill: #a8a8a8; font-weight: 600; }
.rl text { font-size: 12.500px; fill: #4a4a4a; text-anchor: middle; letter-spacing: .3px; }
.cr { font-family: "Liberation Sans", sans-serif; font-size: 21px; fill: #1d78c4; }
.ah { font-family: "Liberation Sans", sans-serif; font-size: 25.500px; font-weight: 700; fill: #16163f; }
.attr { position: absolute; right: 18px; bottom: 3px; font-family: "Liberation Sans", sans-serif; font-size: 14px; line-height: 16px; color: #111; white-space: nowrap; }
.attr a { color: #0d6ebd; }

.mode { position: absolute; left: 8px; top: 8px; width: 99px; height: 39px; display: flex; border: 1px solid #00264d; border-radius: 3px; background: #fff; overflow: hidden; }
.mode span { display: flex; align-items: center; justify-content: center; }
.mode-on { width: 49px; background: #00264d; }
.mode-off { width: 48px; }
.zoom { position: absolute; left: 505px; top: 191px; width: 32px; height: 61px; border: 2px solid #c9c9c5; border-radius: 3px; overflow: hidden; display: flex; flex-direction: column; }
.zb { flex: 1; border: 0; font-size: 24px; line-height: 24px; font-weight: 500; color: #111; }
.zb-off { background: #f4f4f4; color: #bbb; border-bottom: 1px solid #c9c9c5; }
.lasso { position: absolute; left: 505px; top: 265px; width: 32px; height: 32px; border: 2px solid #c9c9c5; border-radius: 3px; display: flex; align-items: center; justify-content: center; }
.layers { position: absolute; left: 491px; top: 310px; width: 46px; height: 45px; border: 2px solid #c9c9c5; border-radius: 3px; display: flex; align-items: center; justify-content: center; }

/* floating cards */
.card { background: #fff; border: 0; border-radius: 10px; box-shadow: 0 0 4px rgba(0, 0, 0, .2); }
.resize { position: absolute; z-index: 2; left: 998px; top: 362px; width: 50px; height: 50px; display: flex; align-items: center; justify-content: center; }
.tops { position: absolute; right: 10px; top: 10px; display: flex; gap: 10px; }
.live { width: 81px; height: 50px; display: flex; align-items: center; padding-left: 15px; gap: 10px; font-size: 15px; color: #00264d; }
.live i { width: 16px; height: 16px; border-radius: 50%; background: #00264d; display: block; }
.live span { transform: scaleX(.86); transform-origin: left center; }
.expand { width: 49px; height: 50px; display: flex; align-items: center; justify-content: center; }
```
